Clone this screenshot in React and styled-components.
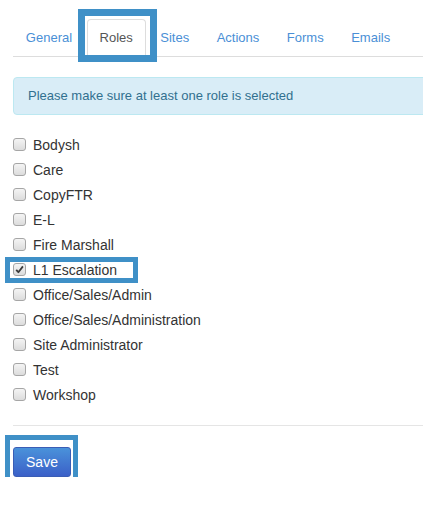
import React, { useState } from "react";
import styled, { createGlobalStyle } from "styled-components";

const Global = createGlobalStyle`
  html, body { margin: 0; padding: 0; background: #fff; overflow: hidden; }
  body { font-family: "Liberation Sans", Arial, sans-serif; color: #333; }
`;

const Viewport = styled.div`
  width: 100%;
  overflow: hidden;
`;

const Page = styled.div`
  padding: 19px 0 0 13px;
  margin-right: -20px;
`;

const Tabs = styled.ul`
  list-style: none;
  margin: 0;
  padding: 0;
  display: flex;
  border-bottom: 1px solid #ddd;
  height: 37px;
`;

const Tab = styled.li`
  position: relative;
  margin-right: 1.8px;
  margin-bottom: -1px;
  height: 38px;
`;

const TabLink = styled.a`
  display: block;
  box-sizing: border-box;
  height: 38px;
  padding: 9px 11.85px;
  font-size: 13px;
  line-height: 18px;
  border: 1px solid ${(p) => (p.$active ? "#ddd" : "transparent")};
  border-bottom-color: ${(p) => (p.$active ? "#fff" : "transparent")};
  border-radius: 4px 4px 0 0;
  background: ${(p) => (p.$active ? "#fff" : "transparent")};
  color: ${(p) => (p.$active ? "#555" : "#4a8fd6")};
  text-decoration: none;
  cursor: pointer;
`;

const Highlight = styled.div`
  position: absolute;
  box-sizing: border-box;
  border: ${(p) => p.$w || 5}px solid #3f90c7;
  pointer-events: none;
`;

const Alert = styled.div`
  margin-top: 20px;
  box-sizing: border-box;
  height: 38px;
  padding: 9px 14px;
  font-size: 13px;
  line-height: 18px;
  background: #d9edf7;
  border: 1px solid #bce8f1;
  border-radius: 4px;
  color: #31708f;
`;

const List = styled.div`
  margin-top: 17px;
  display: flex;
  flex-direction: column;
`;

const Row = styled.label`
  position: relative;
  display: flex;
  align-items: center;
  height: 25px;
  font-size: 14px;
  color: #333;
  cursor: pointer;
`;

const Box = styled.span`
  box-sizing: border-box;
  width: 13px;
  height: 13px;
  margin-right: 7px;
  border: 1px solid #a6a6a6;
  border-radius: 3px;
  background: linear-gradient(#f4f4f4, #dcdcdc);
  display: flex;
  align-items: center;
  justify-content: center;
  flex-shrink: 0;
`;

const Footer = styled.div`
  margin-top: 18px;
  border-top: 1px solid #e5e5e5;
  padding-top: 21px;
`;

const SaveWrap = styled.div`
  position: relative;
  display: inline-block;
`;

const SaveButton = styled.button`
  box-sizing: border-box;
  height: 30px;
  width: 58px;
  padding: 4px 12px;
  font-family: "Liberation Sans", Arial, sans-serif;
  font-size: 14px;
  line-height: 20px;
  color: #fff;
  border: 1px solid #3a5db5;
  border-radius: 3px;
  background: linear-gradient(#4a92da, #3b60c8);
  cursor: pointer;
`;

const roles = [
  "Bodysh",
  "Care",
  "CopyFTR",
  "E-L",
  "Fire Marshall",
  "L1 Escalation",
  "Office/Sales/Admin",
  "Office/Sales/Administration",
  "Site Administrator",
  "Test",
  "Workshop",
];

const tabs = ["General", "Roles", "Sites", "Actions", "Forms", "Emails"];

function Check({ checked }) {
  return (
    <Box>
      {checked && (
        <svg width="9" height="9" viewBox="0 0 9 9">
          <path d="M1.2 4.8 L3.4 7.2 L7.9 1.4" fill="none" stroke="#3a3a3a" strokeWidth="1.8" strokeLinejoin="round" />
        </svg>
      )}
    </Box>
  );
}

export default function App() {
  const [selected, setSelected] = useState({ "L1 Escalation": true });
  return (
    <>
      <Global />
      <Viewport>
        <Page>
          <Tabs>
            {tabs.map((t) => (
              <Tab key={t}>
                <TabLink $active={t === "Roles"}>{t}</TabLink>
                {t === "Roles" && (
                  <Highlight $w={7} style={{ left: -9, right: -11, top: -10, bottom: -5 }} />
                )}
              </Tab>
            ))}
          </Tabs>
          <Alert>Please make sure at least one role is selected</Alert>
          <List>
            {roles.map((r) => (
              <Row
                key={r}
                onClick={() => setSelected((s) => ({ ...s, [r]: !s[r] }))}
              >
                <Check checked={!!selected[r]} />
                {r}
                {r === "L1 Escalation" && (
                  <Highlight style={{ left: -8, top: 0, width: 133, height: 26 }} />
                )}
              </Row>
            ))}
          </List>
          <Footer>
            <SaveWrap>
              <SaveButton>Save</SaveButton>
              <Highlight style={{ left: -8, right: -7, top: -12, bottom: -9 }} />
            </SaveWrap>
          </Footer>
        </Page>
      </Viewport>
    </>
  );
}
